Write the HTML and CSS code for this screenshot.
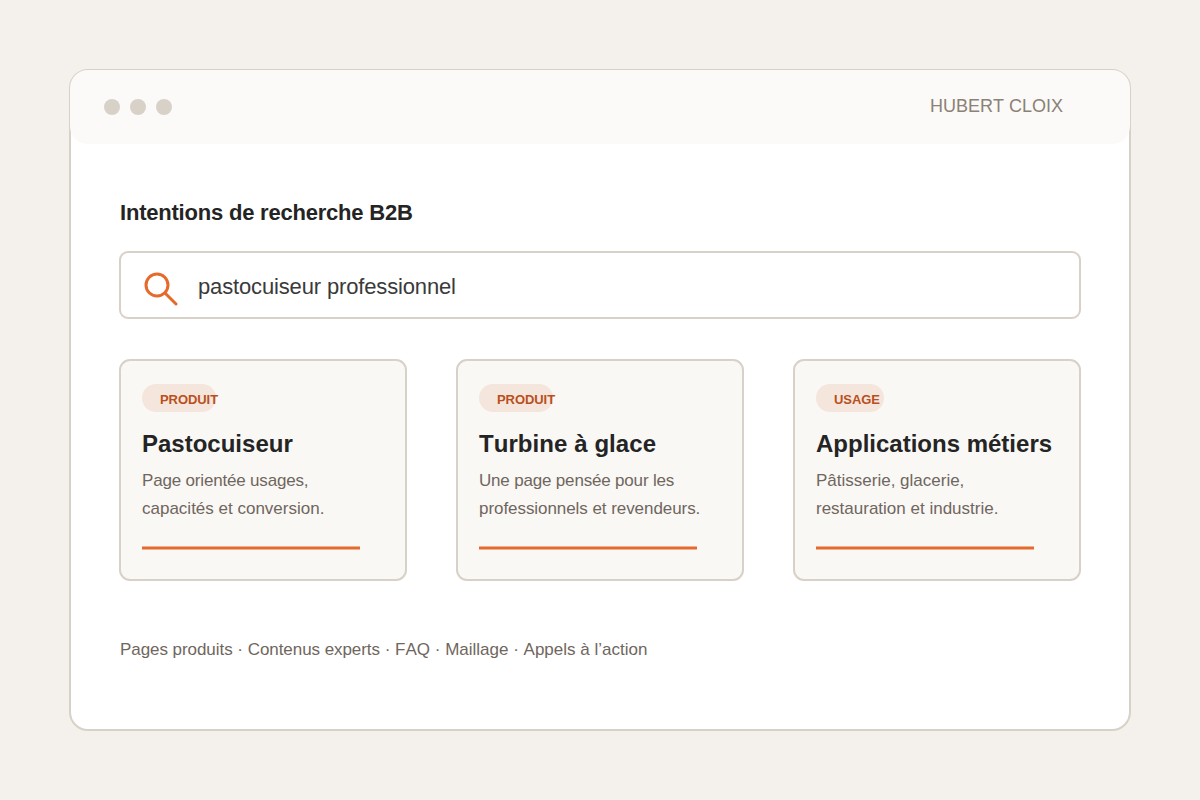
FILE: index.html
```
<!DOCTYPE html>
<html lang="fr">
<head>
    <meta charset="utf-8">
    <title>Intentions de recherche B2B</title>
    <link rel="stylesheet" href="styles.css">
</head>
<body>
    <div class="window">
        <div class="topbar">
            <div class="dots">
                <span class="dot"></span>
                <span class="dot"></span>
                <span class="dot"></span>
            </div>
            <div class="brand">HUBERT CLOIX</div>
        </div>
        <div class="content">
            <h1>Intentions de recherche B2B</h1>
            <div class="search">
                <svg class="search-icon" width="36" height="36" viewBox="0 0 36 36">
                    <circle cx="15" cy="15" r="11"/>
                    <path d="M23 23L34 34"/>
                </svg>
                <span>pastocuiseur professionnel</span>
            </div>
            <div class="cards">
                <div class="card">
                    <div class="tag">PRODUIT</div>
                    <h2>Pastocuiseur</h2>
                    <p><span class="tight">Page orientée usages,</span><br>capacités et conversion.</p>
                    <svg class="rule" width="218" height="4"><path d="M0 2H218"/></svg>
                </div>
                <div class="card">
                    <div class="tag">PRODUIT</div>
                    <h2 class="wide">Turbine à glace</h2>
                    <p><span class="tight">Une page pensée pour les</span><br><span class="snug">professionnels et revendeurs.</span></p>
                    <svg class="rule" width="218" height="4"><path d="M0 2H218"/></svg>
                </div>
                <div class="card">
                    <div class="tag tag-small">USAGE</div>
                    <h2>Applications métiers</h2>
                    <p>Pâtisserie, glacerie,<br>restauration et industrie.</p>
                    <svg class="rule" width="218" height="4"><path d="M0 2H218"/></svg>
                </div>
            </div>
            <div class="footer"><span class="snug">Pages produits</span> · <span class="snug">Contenus experts</span> · FAQ · Maillage · Appels à l’action</div>
        </div>
    </div>
</body>
</html>
```
FILE: styles.css
```
* {
    box-sizing: border-box;
}
body {
    margin: 0;
    padding: 69px;
    height: 800px;
    background-color: #f4f0eb;
    font-family: "Liberation Sans", Arial, sans-serif;
    font-kerning: none;
    color: #242424;
}
h1, h2, p {
    margin: 0;
}
.window {
    height: 662px;
    background-color: #fff;
    border: 2px solid #d8d1c7;
    border-radius: 19px;
}
/* the bar covers the inner half of the window border */
.topbar {
    display: flex;
    justify-content: space-between;
    align-items: center;
    height: 74px;
    margin: -1px;
    padding: 0 67px 0 34px;
    background-color: #fbfaf8;
    border-radius: 18px;
}
.dots {
    display: flex;
    gap: 10px;
}
.dot {
    width: 16px;
    height: 16px;
    border-radius: 50%;
    background-color: #d8d1c7;
}
.brand {
    font-size: 18px;
    line-height: 20px;
    padding-bottom: 2px;
    color: #8b8175;
}
.content {
    padding: 57px 48px 0;
}
h1 {
    margin-left: 1px;
    font-size: 22px;
    line-height: 25px;
    letter-spacing: -0.21px;
}
.search {
    display: flex;
    align-items: center;
    height: 68px;
    margin-top: 26px;
    padding-left: 21px;
    border: 2px solid #d8d1c7;
    border-radius: 9px;
    font-size: 22px;
    line-height: 25px;
    letter-spacing: -0.15px;
    color: #3a3a3a;
}
.search-icon {
    margin: 6px 20px 0 0;
    fill: none;
    stroke: #e56a2c;
    stroke-width: 3;
    stroke-linecap: round;
}
.search span {
    padding-top: 3px;
}
.cards {
    display: grid;
    grid-template-columns: repeat(3, 288px);
    gap: 49px;
    margin-top: 40px;
}
.card {
    height: 222px;
    padding: 23px 21px 0;
    background-color: #faf8f5;
    border: 2px solid #d8d1c7;
    border-radius: 11px;
}
.tag {
    width: 74px;
    height: 28px;
    padding: 8px 0 0 18px;
    border-radius: 14px;
    background-color: #f5e6dd;
    color: #b94f1c;
    font-size: 13px;
    font-weight: bold;
    line-height: 15px;
    letter-spacing: -0.07px;
    white-space: nowrap;
}
.tag-small {
    width: 68px;
}
h2 {
    margin-top: 18px;
    font-size: 24px;
    line-height: 27px;
    white-space: nowrap;
}
.wide {
    letter-spacing: 0.07px;
}
p {
    margin-top: 10px;
    font-size: 17px;
    line-height: 28px;
    color: #6f665e;
    white-space: nowrap;
}
.tight {
    letter-spacing: -0.18px;
}
.snug {
    letter-spacing: -0.06px;
}
.rule {
    display: block;
    margin-top: 23px;
    stroke: #e56a2c;
    stroke-width: 3;
}
.footer {
    margin: 59px 0 0 1px;
    font-size: 17px;
    line-height: 19px;
    color: #6f665e;
}
```
